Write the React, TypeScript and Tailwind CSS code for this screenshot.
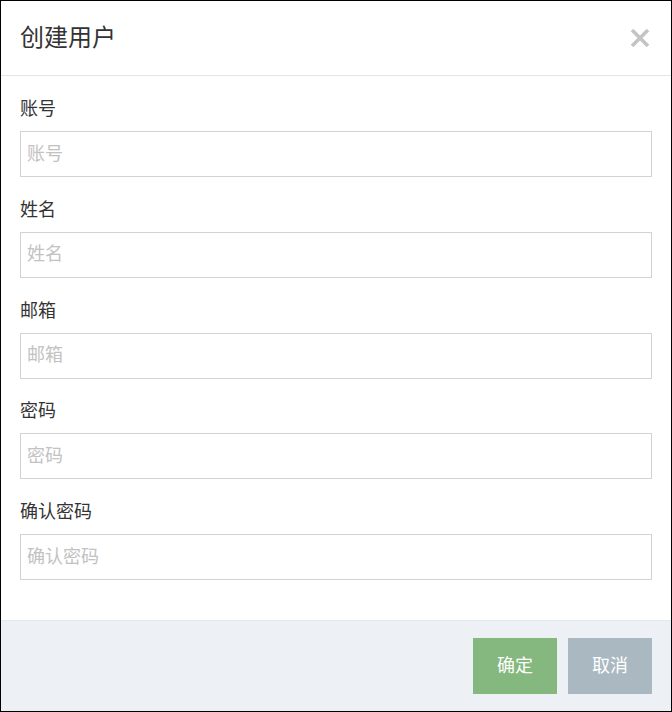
const FIELDS = ["账号", "姓名", "邮箱", "密码", "确认密码"];

export default function App() {
  return (
    <div
      className="w-[672px] h-[712px] border border-black bg-white flex flex-col text-[#333]"
      style={{ fontFamily: '"Liberation Sans", "Noto Sans CJK SC", sans-serif' }}
    >
      {/* 标题栏 */}
      <div className="h-[75px] shrink-0 border-b border-[#e5e5e5] flex items-center justify-between pl-[19px] pr-[20px]">
        <h3 className="text-[24px] leading-none">创建用户</h3>
        <button className="w-[22px] h-[22px] flex items-center justify-center">
          <svg viewBox="0 0 20 20" className="w-[20px] h-[20px]">
            <path d="M2 2L18 18M18 2L2 18" stroke="#c4c4c4" strokeWidth="3.6" strokeLinecap="butt" />
          </svg>
        </button>
      </div>

      {/* 表单 */}
      <div className="flex-1 pl-[19px] pr-[19px] pt-[21px] flex flex-col gap-[20.75px]">
        {FIELDS.map((f) => (
          <div key={f} className="flex flex-col gap-[10px]">
            <label className="text-[18px] leading-[24px]">{f}</label>
            <input
              placeholder={f}
              className="h-[46px] w-full border border-[#d2d2d2] px-[6px] text-[18px] outline-none placeholder:text-[#c2c2c2]"
            />
          </div>
        ))}
      </div>

      {/* 底部按钮 */}
      <div className="h-[91px] shrink-0 bg-[#edf1f5] border-t border-[#e3e7eb] flex justify-end gap-[11px] pt-[17px] pr-[19px]">
        <button className="w-[84px] h-[56px] bg-[#85b87e] text-white text-[18px]">确定</button>
        <button className="w-[84px] h-[56px] bg-[#aab8c1] text-white text-[18px]">取消</button>
      </div>
    </div>
  );
}
